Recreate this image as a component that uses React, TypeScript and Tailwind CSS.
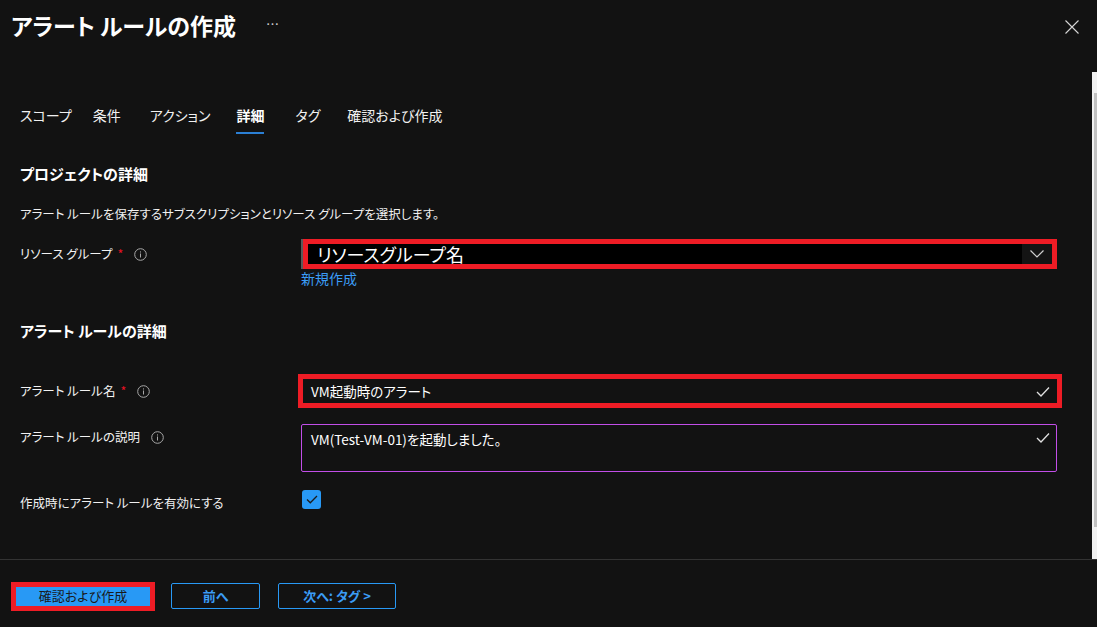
import React from "react";

const font = "font-['Noto_Sans_CJK_JP','Noto_Sans',sans-serif] [font-feature-settings:'palt']";

function InfoIcon() {
  return (
    <svg width="13" height="13" viewBox="0 0 13 13" className="shrink-0">
      <circle cx="6.5" cy="6.5" r="5.8" fill="none" stroke="#a8a8a8" strokeWidth="1" />
      <rect x="6" y="5.5" width="1" height="4" fill="#a8a8a8" />
      <rect x="6" y="3.4" width="1" height="1.1" fill="#a8a8a8" />
    </svg>
  );
}

function Check({ color = "#e0e0e0" }: { color?: string }) {
  return (
    <svg width="14" height="11" viewBox="0 0 14 11">
      <path d="M1 6 L5 10 L13 1.5" fill="none" stroke={color} strokeWidth="1.3" />
    </svg>
  );
}

function Label({ text, required }: { text: string; required?: boolean }) {
  return (
    <div className="flex items-center text-[12.5px] text-[#f2f2f2]">
      <span>{text}</span>
      {required && <span className="ml-[5px] text-[#e81123]">*</span>}
      <span className="ml-[11px] flex items-center">
        <InfoIcon />
      </span>
    </div>
  );
}

const tabs = [
  { t: "スコープ", ml: "ml-0" },
  { t: "条件", ml: "ml-[21px]" },
  { t: "アクション", ml: "ml-[29px]" },
  { t: "詳細", ml: "ml-[26px]" },
  { t: "タグ", ml: "ml-[31px]" },
  { t: "確認および作成", ml: "ml-[27px]" },
];

export default function App() {
  return (
    <div className={`flex h-[627px] w-[1097px] flex-col overflow-hidden bg-[#121212] text-white ${font}`}>
      {/* Header */}
      <div className="flex h-[72px] shrink-0 items-start pl-[11px] pr-[18px]">
        <h1 className="mt-[7px] text-[23px] leading-[36px] font-semibold text-white">
          アラート ルールの作成
        </h1>
        <span className="mt-[14px] ml-[30px] text-[13px] text-[#d0d0d0]">…</span>
        <div className="flex-1" />
        <svg width="14" height="14" viewBox="0 0 14 14" className="mt-[20px]">
          <path d="M0.5 0.5 L13.5 13.5 M13.5 0.5 L0.5 13.5" stroke="#d6d6d6" strokeWidth="1.1" />
        </svg>
      </div>

      {/* Body */}
      <div className="flex min-h-0 flex-1">
        <div className="flex-1 pl-[20px] pr-[35px]">
          {/* Tabs */}
          <div className="mt-[33px] flex text-[14px] leading-[20px]">
            {tabs.map(({ t, ml }) => (
              <div
                key={t}
                className={
                  t === "詳細"
                    ? `${ml} border-b-2 border-[#2b7fd4] pb-[7px] font-bold text-white`
                    : `${ml} border-b-2 border-transparent pb-[7px] text-[#f0f0f0]`
                }
              >
                {t}
              </div>
            ))}
          </div>

          {/* Project details */}
          <h2 className="mt-[29px] text-[15px] leading-[22px] font-bold text-white">プロジェクトの詳細</h2>
          <p className="mt-[19px] text-[12.5px] leading-[20px] text-[#f0f0f0]">
            アラート ルールを保存するサブスクリプションとリソース グループを選択します。
          </p>

          <div className="mt-[15px] flex">
            <div className="flex h-[30px] w-[281px] shrink-0 items-center">
              <Label text="リソース グループ" required />
            </div>
            <div className="flex-1">
              <div className="flex">
                <div className="h-[30px] w-[2px] bg-[#5a5a5a]" />
                <div className="flex h-[30px] flex-1 border-[5px] border-[#ee1c25]">
                  <div className="flex flex-1 items-center bg-black pl-[9px] text-[18px] leading-[20px] text-white">
                    リソースグループ名
                  </div>
                  <div className="flex w-[30px] items-center justify-center bg-[#141414]">
                    <svg width="14" height="8" viewBox="0 0 14 8">
                      <path d="M0.5 0.5 L7 7 L13.5 0.5" fill="none" stroke="#cfcfcf" strokeWidth="1.2" />
                    </svg>
                  </div>
                </div>
              </div>
              <a className="block text-[14px] leading-[18px] text-[#3b9cf5]">新規作成</a>
            </div>
          </div>

          {/* Alert rule details */}
          <h2 className="mt-[33px] text-[15px] leading-[22px] font-bold text-white">アラート ルールの詳細</h2>

          <div className="mt-[32px] flex">
            <div className="flex h-[34px] w-[278px] shrink-0 items-center">
              <Label text="アラート ルール名" required />
            </div>
            <div className="-mr-[5px] flex h-[34px] flex-1 items-center border-[5px] border-[#ee1c25] pr-[7px] pl-[8px]">
              <span className="flex-1 text-[13.5px] leading-[20px] text-white">VM起動時のアラート</span>
              <Check />
            </div>
          </div>

          <div className="mt-[16px] flex">
            <div className="flex h-[26px] w-[281px] shrink-0 items-center">
              <Label text="アラート ルールの説明" />
            </div>
            <div className="flex h-[48px] flex-1 items-start rounded-[2px] border border-[#c24ee8] pt-[4px] pr-[6px] pl-[9px]">
              <span className="flex-1 text-[13.5px] leading-[20px] text-white">VM(Test-VM-01)を起動しました。</span>
              <span className="mt-[3px]">
                <Check />
              </span>
            </div>
          </div>

          <div className="mt-[18px] flex">
            <div className="flex h-[23px] w-[281px] shrink-0 items-end text-[12.5px] leading-[20px] text-[#f0f0f0]">
              作成時にアラート ルールを有効にする
            </div>
            <div className="ml-[1px] flex h-[19px] w-[19px] items-center justify-center rounded-[3px] bg-[#2899f5]">
              <svg width="12" height="9" viewBox="0 0 12 9">
                <path d="M1 4.5 L4.3 7.8 L11 1" fill="none" stroke="#1b1b1b" strokeWidth="1.3" />
              </svg>
            </div>
          </div>
        </div>

        {/* Scrollbar */}
        <div className="flex w-[5px] shrink-0 flex-col bg-[#f1f1f1] pt-[21px] pb-[32px] pl-[2px]">
          <div className="flex-1 bg-[#c1c1c1]" />
        </div>
      </div>

      {/* Footer */}
      <div className="flex h-[68px] shrink-0 items-center gap-[16px] border-t border-[#333333] pt-[5px] pl-[11px]">
        <div className="border-[5px] border-[#ee1c25]">
          <div className="flex h-[19px] w-[134px] items-center justify-center bg-[#2899f5] text-[13px] text-[#1a1a1a]">
            確認および作成
          </div>
        </div>
        <button className="flex h-[26px] w-[89px] items-center justify-center rounded-[2px] border border-[#2899f5] text-[13px] font-bold text-[#3b9cf5]">
          前へ
        </button>
        <button className="ml-[2px] flex h-[26px] w-[118px] items-center justify-center rounded-[2px] border border-[#2899f5] text-[13px] font-bold text-[#3b9cf5]">
          次へ: タグ &gt;
        </button>
      </div>
    </div>
  );
}
